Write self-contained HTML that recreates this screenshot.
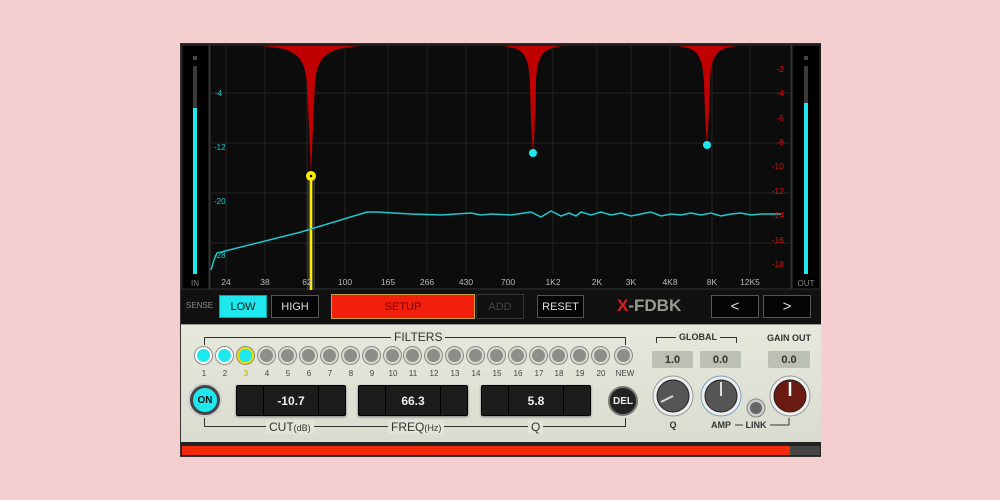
<!DOCTYPE html>
<html><head><meta charset="utf-8"><style>
*{margin:0;padding:0;box-sizing:border-box}
body{width:1000px;height:500px;background:#f3d0cf;position:relative;overflow:hidden;font-family:"Liberation Sans",sans-serif}
.abs{position:absolute}
.btn{position:absolute;border:1px solid #555;background:#050505;color:#ddd;font-size:11px;display:flex;align-items:center;justify-content:center}
.led{position:absolute;width:17px;height:17px;border-radius:50%;background:#8c8e88;border:2px solid #d8d9d0;box-shadow:0 0 0 1px #888}
.num{position:absolute;font-size:8px;color:#444;width:20px;text-align:center}
.box{position:absolute;height:31px;background:#1c1c1c;border:1px solid #000;border-radius:2px;box-shadow:0 1px 2px #777;color:#eee;font-size:12px;font-weight:bold;display:flex;align-items:center;justify-content:center}
.lbl{position:absolute;font-size:12px;color:#333;background:#e2e4d8;padding:0 3px}
.vb{position:absolute;height:17px;background:#bcbfb5;border-radius:2px;font-size:11px;font-weight:bold;color:#333;display:flex;align-items:center;justify-content:center}
</style></head><body>
<div class="abs" style="left:180px;top:43px;width:641px;height:414px;background:#111;border:1px solid #333"></div>
<svg class="abs" style="left:181px;top:44px" width="640" height="246">
<rect width="640" height="246" fill="#0b0b0b"/>
<rect x="1" y="1" width="27" height="244" fill="#000" stroke="#333"/>
<rect x="12" y="12" width="4" height="4" fill="#444"/>
<rect x="12" y="22" width="4" height="208" fill="#3a3a3a"/>
<rect x="12" y="64" width="4" height="166" fill="#1ee8ee"/>
<text x="14" y="242" font-size="8" fill="#888" text-anchor="middle">IN</text>
<rect x="611" y="1" width="28" height="244" fill="#000" stroke="#333"/>
<rect x="623" y="12" width="4" height="4" fill="#444"/>
<rect x="623" y="22" width="4" height="208" fill="#3a3a3a"/>
<rect x="623" y="59" width="4" height="171" fill="#1ee8ee"/>
<text x="625" y="242" font-size="8" fill="#888" text-anchor="middle">OUT</text>
<rect x="29" y="1" width="581" height="244" fill="#0c0c0c" stroke="#333"/>
<g stroke="#232323" stroke-width="1">
<line x1="30" x2="609" y1="49" y2="49"/><line x1="30" x2="609" y1="99" y2="99"/><line x1="30" x2="609" y1="149" y2="149"/><line x1="30" x2="609" y1="199" y2="199"/>
<line x1="45" x2="45" y1="2" y2="230"/><line x1="84" x2="84" y1="2" y2="230"/><line x1="126" x2="126" y1="2" y2="230"/><line x1="164" x2="164" y1="2" y2="230"/><line x1="207" x2="207" y1="2" y2="230"/><line x1="246" x2="246" y1="2" y2="230"/><line x1="285" x2="285" y1="2" y2="230"/><line x1="327" x2="327" y1="2" y2="230"/><line x1="372" x2="372" y1="2" y2="230"/><line x1="416" x2="416" y1="2" y2="230"/><line x1="450" x2="450" y1="2" y2="230"/><line x1="489" x2="489" y1="2" y2="230"/><line x1="531" x2="531" y1="2" y2="230"/><line x1="569" x2="569" y1="2" y2="230"/>
</g>
<g fill="#c00000">
<path d="M80,2 C112,4 124,10 126,40 C128,80 129,110 130,131 C131,110 132,80 134,40 C136,10 148,4 180,2Z"/>
<path d="M322,2 C342,4 348,10 349,40 C350,80 351,100 352,108 C353,100 354,80 355,40 C356,10 362,4 382,2Z"/>
<path d="M496,2 C516,4 522,10 523,40 C524,70 525,90 526,100 C527,90 528,70 529,40 C530,10 536,4 556,2Z"/>
</g>
<rect x="126" y="132" width="8" height="114" fill="#444" opacity=".6"/>
<line x1="130" y1="132" x2="130" y2="246" stroke="#ffee00" stroke-width="2.5"/>
<circle cx="130" cy="132" r="5" fill="#ffee00"/><circle cx="130" cy="132" r="1.3" fill="#000"/>
<circle cx="352" cy="109" r="4" fill="#1ee8ee"/><circle cx="526" cy="101" r="4" fill="#1ee8ee"/>
<polyline fill="none" stroke="#1ec8cc" stroke-width="1.5" points="30,226 33,216 36,209 120,188 186,168 196,168 230,170 260,171 290,169 300,171 310,170 330,171 350,168 360,173 370,167 380,172 388,169 395,172 400,168 410,171 420,168 430,171 440,169 450,172 460,170 470,168 480,172 490,170 500,171 510,169 520,171 530,169 540,172 550,170 560,169 570,171 580,170 600,170"/>
<g font-size="8" fill="#22cccc"><text x="34" y="52">-4</text><text x="33" y="106">-12</text><text x="33" y="160">-20</text><text x="33" y="214">-28</text></g>
<g font-size="8.5" fill="#d01010" text-anchor="end"><text x="603" y="28">-2</text><text x="603" y="52">-4</text><text x="603" y="77">-6</text><text x="603" y="101">-8</text><text x="603" y="125">-10</text><text x="603" y="150">-12</text><text x="603" y="174">-14</text><text x="603" y="199">-16</text><text x="603" y="223">-18</text></g>
<g font-size="8.5" fill="#bbb" text-anchor="middle"><text x="45" y="241">24</text><text x="84" y="241">38</text><text x="126" y="241">62</text><text x="164" y="241">100</text><text x="207" y="241">165</text><text x="246" y="241">266</text><text x="285" y="241">430</text><text x="327" y="241">700</text><text x="372" y="241">1K2</text><text x="416" y="241">2K</text><text x="450" y="241">3K</text><text x="489" y="241">4K8</text><text x="531" y="241">8K</text><text x="569" y="241">12K5</text></g>
</svg>
<div class="abs" style="left:181px;top:290px;width:640px;height:34px;background:#111"></div>
<div class="abs" style="left:186px;top:301px;font-size:8px;color:#888">SENSE</div>
<div class="btn" style="left:219px;top:295px;width:48px;height:23px;background:#1ee8ee;color:#111;border-color:#0aa">LOW</div>
<div class="btn" style="left:271px;top:295px;width:48px;height:23px">HIGH</div>
<div class="btn" style="left:331px;top:294px;width:144px;height:25px;background:#f21f0c;color:#7a0000;border-color:#c9a13a">SETUP</div>
<div class="btn" style="left:476px;top:294px;width:48px;height:25px;background:#111;color:#444;border-color:#333">ADD</div>
<div class="btn" style="left:537px;top:295px;width:47px;height:23px">RESET</div>
<div class="abs" style="left:617px;top:296px;font-size:17px;font-weight:bold;color:#9a9a90"><span style="color:#e21d1d">X</span>-FDBK</div>
<div class="btn" style="left:711px;top:295px;width:48px;height:23px;font-size:15px">&lt;</div>
<div class="btn" style="left:763px;top:295px;width:48px;height:23px;font-size:15px">&gt;</div>
<div class="abs" style="left:181px;top:324px;width:640px;height:118px;background:linear-gradient(#e6e8dc,#d9dccf);border-top:1px solid #999"></div>
<div class="abs" style="left:204px;top:337px;width:422px;height:8px;border:1px solid #333;border-bottom:none"></div>
<div class="lbl" style="left:391px;top:330px">FILTERS</div>
<div class="led" style="left:195px;top:347px;background:#1ee8ee;border-color:#fff"></div>
<div class="led" style="left:216px;top:347px;background:#1ee8ee;border-color:#fff"></div>
<div class="led" style="left:237px;top:347px;background:#1ee8ee;border-color:#f0e000"></div>
<div class="led" style="left:258px;top:347px"></div><div class="led" style="left:279px;top:347px"></div><div class="led" style="left:300px;top:347px"></div><div class="led" style="left:321px;top:347px"></div><div class="led" style="left:342px;top:347px"></div><div class="led" style="left:363px;top:347px"></div><div class="led" style="left:384px;top:347px"></div><div class="led" style="left:404px;top:347px"></div><div class="led" style="left:425px;top:347px"></div><div class="led" style="left:446px;top:347px"></div><div class="led" style="left:467px;top:347px"></div><div class="led" style="left:488px;top:347px"></div><div class="led" style="left:509px;top:347px"></div><div class="led" style="left:530px;top:347px"></div><div class="led" style="left:550px;top:347px"></div><div class="led" style="left:571px;top:347px"></div><div class="led" style="left:592px;top:347px"></div><div class="led" style="left:615px;top:347px"></div>
<div class="num" style="left:194px;top:369px">1</div><div class="num" style="left:215px;top:369px">2</div><div class="num" style="left:236px;top:369px;color:#c9a800">3</div><div class="num" style="left:257px;top:369px">4</div><div class="num" style="left:278px;top:369px">5</div><div class="num" style="left:299px;top:369px">6</div><div class="num" style="left:320px;top:369px">7</div><div class="num" style="left:341px;top:369px">8</div><div class="num" style="left:362px;top:369px">9</div><div class="num" style="left:383px;top:369px">10</div><div class="num" style="left:403px;top:369px">11</div><div class="num" style="left:424px;top:369px">12</div><div class="num" style="left:445px;top:369px">13</div><div class="num" style="left:466px;top:369px">14</div><div class="num" style="left:487px;top:369px">15</div><div class="num" style="left:508px;top:369px">16</div><div class="num" style="left:529px;top:369px">17</div><div class="num" style="left:549px;top:369px">18</div><div class="num" style="left:570px;top:369px">19</div><div class="num" style="left:591px;top:369px">20</div><div class="num" style="left:614px;top:369px;width:22px">NEW</div>
<div class="abs" style="left:190px;top:385px;width:30px;height:30px;border-radius:50%;background:#1ee8ee;border:3px solid #444;box-shadow:0 0 0 2px #ccc;font-size:10px;font-weight:bold;color:#111;display:flex;align-items:center;justify-content:center">ON</div>
<div class="box" style="left:236px;top:385px;width:110px"><div class="abs" style="left:26px;top:0;width:1px;height:29px;background:#000"></div>-10.7<div class="abs" style="right:26px;top:0;width:1px;height:29px;background:#000"></div></div>
<div class="box" style="left:358px;top:385px;width:110px"><div class="abs" style="left:26px;top:0;width:1px;height:29px;background:#000"></div>66.3<div class="abs" style="right:26px;top:0;width:1px;height:29px;background:#000"></div></div>
<div class="box" style="left:481px;top:385px;width:110px"><div class="abs" style="left:26px;top:0;width:1px;height:29px;background:#000"></div>5.8<div class="abs" style="right:26px;top:0;width:1px;height:29px;background:#000"></div></div>
<div class="abs" style="left:608px;top:386px;width:30px;height:30px;border-radius:50%;background:#222;border:2px solid #777;color:#eee;font-size:10px;font-weight:bold;display:flex;align-items:center;justify-content:center">DEL</div>
<div class="abs" style="left:204px;top:418px;width:422px;height:9px;border:1px solid #333;border-top:none"></div>
<div class="lbl" style="left:266px;top:420px">CUT<span style="font-size:9px">(dB)</span></div>
<div class="lbl" style="left:388px;top:420px">FREQ<span style="font-size:9px">(Hz)</span></div>
<div class="lbl" style="left:528px;top:420px">Q</div>
<div class="abs" style="left:656px;top:337px;width:81px;height:6px;border:1px solid #333;border-bottom:none"></div>
<div class="lbl" style="left:676px;top:332px;font-size:9px;font-weight:bold">GLOBAL</div>
<div class="abs" style="left:767px;top:333px;font-size:9px;font-weight:bold;color:#333">GAIN OUT</div>
<div class="vb" style="left:652px;top:351px;width:41px">1.0</div>
<div class="vb" style="left:700px;top:351px;width:41px">0.0</div>
<div class="vb" style="left:768px;top:351px;width:42px">0.0</div>
<svg class="abs" style="left:645px;top:370px" width="180" height="60">
<circle cx="28" cy="26" r="20" fill="#eee" stroke="#999"/><circle cx="28" cy="26" r="16" fill="#555" stroke="#222"/><line x1="28" y1="26" x2="16" y2="32" stroke="#ddd" stroke-width="2"/>
<circle cx="76" cy="26" r="20" fill="#eee" stroke="#7aa0c0"/><circle cx="76" cy="26" r="16" fill="#555" stroke="#222"/><line x1="76" y1="26" x2="76" y2="12" stroke="#ddd" stroke-width="2"/>
<circle cx="111" cy="38" r="9" fill="#ccc" stroke="#888"/><circle cx="111" cy="38" r="6" fill="#666"/>
<circle cx="145" cy="26" r="20" fill="#eee" stroke="#999"/><circle cx="145" cy="26" r="16" fill="#6a1a10" stroke="#222"/><line x1="145" y1="26" x2="145" y2="12" stroke="#fff" stroke-width="2.5"/>
<text x="28" y="58" font-size="9" font-weight="bold" fill="#333" text-anchor="middle">Q</text>
<text x="76" y="58" font-size="9" font-weight="bold" fill="#333" text-anchor="middle">AMP</text>
<text x="111" y="58" font-size="9" font-weight="bold" fill="#333" text-anchor="middle">LINK</text>
<line x1="90" y1="55" x2="98" y2="55" stroke="#333"/><line x1="125" y1="55" x2="144" y2="55" stroke="#333"/><line x1="144" y1="55" x2="144" y2="48" stroke="#333"/>
</svg>
<div class="abs" style="left:181px;top:442px;width:640px;height:14px;background:#222"></div>
<div class="abs" style="left:182px;top:446px;width:608px;height:9px;background:#f22a0a"></div>
<div class="abs" style="left:790px;top:446px;width:30px;height:9px;background:#444"></div>
</body></html>
